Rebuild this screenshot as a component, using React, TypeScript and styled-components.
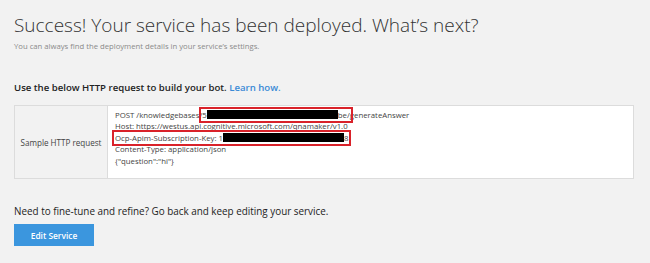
import styled, { createGlobalStyle } from "styled-components";

const GlobalStyle = createGlobalStyle`
  html, body {
    margin: 0;
    padding: 0;
    background: #f2f2f2;
  }
  body {
    font-family: "Open Sans", "Noto Sans", "Liberation Sans", sans-serif;
    color: #222;
  }
`;

const Page = styled.div`
  width: 650px;
  height: 263px;
  box-sizing: border-box;
  padding: 11px 14px 0 14px;
  background: #f2f2f2;
  overflow: hidden;
`;

const Title = styled.h1`
  margin: 0;
  font-size: 19px;
  font-weight: 300;
  line-height: 28px;
  color: #333;
`;

const Subtitle = styled.p`
  margin: 2px 0 0 0;
  font-size: 7.7px;
  line-height: 11px;
  color: #8a8a8a;
`;

const SectionHeading = styled.h2`
  margin: 29px 0 0 0;
  font-size: 9.6px;
  font-weight: 600;
  line-height: 14px;
  color: #222;
`;

const LearnLink = styled.a`
  color: #3a8ad6;
  text-decoration: none;
`;

const RequestTable = styled.div`
  margin-top: 10px;
  width: 620px;
  height: 74px;
  display: grid;
  grid-template-columns: 93px 1fr;
  border: 1px solid #dcdcdc;
  box-sizing: border-box;
`;

const LabelCell = styled.div`
  display: flex;
  align-items: center;
  justify-content: center;
  background: #f2f2f2;
  border-right: 1px solid #dcdcdc;
  font-size: 8.1px;
  color: #444;
`;

const CodeCell = styled.div`
  background: #fff;
  padding: 4px 0 0 7px;
  font-size: 7.8px;
  line-height: 11.4px;
  color: #444;
`;

const CodeLine = styled.div`
  white-space: nowrap;
`;

// red annotation boxes drawn over the request text
const Highlight = styled.span`
  outline: 2px solid #d9222a;
  outline-offset: 1px;
`;

const Redacted = styled.span<{ $w: number }>`
  display: inline-block;
  width: ${(p) => p.$w}px;
  height: 9px;
  background: #000;
  vertical-align: -1px;
`;

const FooterText = styled.p`
  margin: 25px 0 0 0;
  font-size: 9.9px;
  line-height: 14px;
  color: #222;
`;

const EditButton = styled.button`
  margin-top: 6px;
  width: 80px;
  height: 22px;
  border: none;
  background: #3b96de;
  color: #fff;
  font-family: inherit;
  font-size: 8.4px;
  font-weight: 600;
  cursor: pointer;
`;

export default function App() {
  return (
    <Page>
      <GlobalStyle />
      <Title>Success! Your service has been deployed. What’s next?</Title>
      <Subtitle>You can always find the deployment details in your service’s settings.</Subtitle>

      <SectionHeading>
        Use the below HTTP request to build your bot. <LearnLink href="#">Learn how.</LearnLink>
      </SectionHeading>

      <RequestTable>
        <LabelCell>Sample HTTP request</LabelCell>
        <CodeCell>
          <CodeLine>
            POST /knowledgebases/
            <Highlight>
              5<Redacted $w={131} />be/
            </Highlight>
            generateAnswer
          </CodeLine>
          <CodeLine>Host: https://westus.api.cognitive.microsoft.com/qnamaker/v1.0</CodeLine>
          <CodeLine>
            <Highlight>
              Ocp-Apim-Subscription-Key: 1<Redacted $w={121} />8
            </Highlight>
          </CodeLine>
          <CodeLine>Content-Type: application/json</CodeLine>
          <CodeLine>{'{"question":"hi"}'}</CodeLine>
        </CodeCell>
      </RequestTable>

      <FooterText>Need to fine-tune and refine? Go back and keep editing your service.</FooterText>
      <EditButton>Edit Service</EditButton>
    </Page>
  );
}
